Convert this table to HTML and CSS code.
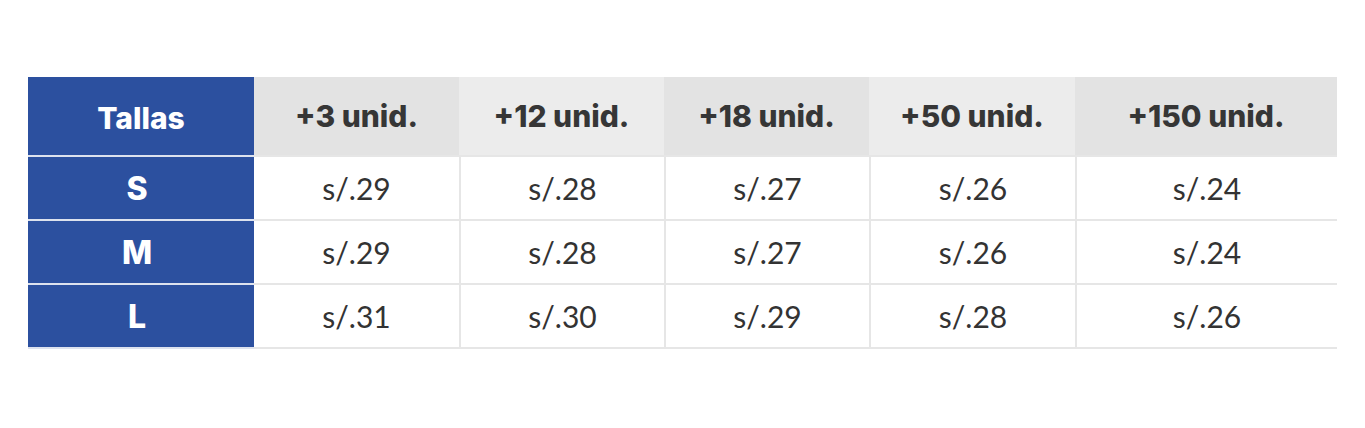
FILE: index.html
```html
<!DOCTYPE html>
<html lang="es">
<head>
<meta charset="utf-8">
<title>Tallas</title>
<link rel="stylesheet" href="styles.css">
</head>
<body>
<div class="price-table">
  <div class="cell size head">Tallas</div>
  <div class="cell qty dark">+3 unid.</div>
  <div class="cell qty light">+12 unid.</div>
  <div class="cell qty dark">+18 unid.</div>
  <div class="cell qty light">+50 unid.</div>
  <div class="cell qty dark">+150 unid.</div>

  <div class="cell size row">S</div>
  <div class="cell price first">s/.29</div>
  <div class="cell price">s/.28</div>
  <div class="cell price">s/.27</div>
  <div class="cell price">s/.26</div>
  <div class="cell price">s/.24</div>

  <div class="cell size row">M</div>
  <div class="cell price first">s/.29</div>
  <div class="cell price">s/.28</div>
  <div class="cell price">s/.27</div>
  <div class="cell price">s/.26</div>
  <div class="cell price">s/.24</div>

  <div class="cell size row">L</div>
  <div class="cell price first">s/.31</div>
  <div class="cell price">s/.30</div>
  <div class="cell price">s/.29</div>
  <div class="cell price">s/.28</div>
  <div class="cell price">s/.26</div>
</div>
</body>
</html>
```
FILE: styles.css
```css
* { box-sizing: border-box; }
html, body { margin: 0; padding: 0; background: #ffffff; }
body { font-family: "Lato", "Liberation Sans", sans-serif; }

.price-table {
  display: grid;
  grid-template-columns: 226px 205px 205px 205px 206px 262px;
  grid-template-rows: 80px 64px 64px 64px;
  margin: 77px 0 0 28px;
  width: 1309px;
}

.cell {
  display: flex;
  align-items: center;
  justify-content: center;
  border-bottom: 2px solid #e6e6e6;
  color: #333333;
}

.size {
  background: #2c509f;
  color: #ffffff;
  font-family: "Inter", "Open Sans", sans-serif;
  font-weight: 800;
  font-size: 30px;
  border-bottom-color: #dde2ee;
}
.size.head { padding-top: 4px; }
.size.row { font-size: 32px; padding-right: 8px; }

.qty {
  font-family: "Inter", "Open Sans", sans-serif;
  font-weight: 800;
  font-size: 30px;
  color: #363636;
}
.dark { background: #e3e3e3; }
.light { background: #ececec; }

.price {
  font-weight: 400;
  font-size: 30px;
  border-left: 2px solid #e6e6e6;
}
.price.first { border-left: none; }
```
